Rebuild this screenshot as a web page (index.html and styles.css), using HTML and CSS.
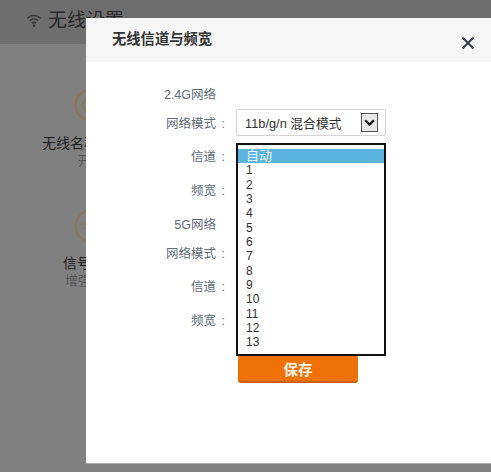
FILE: index.html
```html
<!DOCTYPE html>
<html lang="zh">
<head>
<meta charset="utf-8">
<title>无线信道与频宽</title>
<link rel="stylesheet" href="styles.css">
</head>
<body>
<div class="page">
  <header class="page-head">
    <svg class="wifi" viewBox="0 0 16 16" width="16" height="16"><path d="M1.500 6.200C5 2.600 11 2.600 14.500 6.200M3.800 8.800c2.400-2.300 6-2.300 8.400 0M6 11.200c1.200-1 2.800-1 4 0" fill="none" stroke="#333" stroke-width="1.500"/><circle cx="8" cy="13.600" r="1.300" fill="#333"/></svg>
    <span class="page-title">无线设置</span>
  </header>
  <section class="feature first">
    <svg class="ring" viewBox="0 0 34 34" width="34" height="34"><circle cx="17" cy="17" r="15.500" fill="none" stroke="#8f7654" stroke-width="2"/><circle cx="17" cy="17" r="8" fill="none" stroke="#8f7654" stroke-width="2"/></svg>
    <div class="feature-name">无线名称与密码</div>
    <div class="feature-sub">开启</div>
  </section>
  <section class="feature second">
    <svg class="ring" viewBox="0 0 34 34" width="34" height="34"><circle cx="17" cy="17" r="15.500" fill="none" stroke="#8f7654" stroke-width="1.500"/><path d="M6 15h14M9 19h8" stroke="#8f7654" stroke-width="1.500"/></svg>
    <div class="feature-name">信号强度</div>
    <div class="feature-sub">增强信号</div>
  </section>
</div>

<div class="modal">
  <div class="modal-head">
    <h1 class="modal-title">无线信道与频宽</h1>
    <svg class="close" viewBox="0 0 14 14" width="14" height="14"><path d="M1.500 1.500l11 11M12.500 1.500l-11 11" stroke="#333c48" stroke-width="2" fill="none"/></svg>
  </div>
  <div class="form">
    <div class="row group"><span class="label">2.4G网络</span></div>
    <div class="row mode-row">
      <span class="label">网络模式 :</span>
      <div class="select">
        <span>11b/g/n 混合模式</span>
        <span class="arrow"><svg viewBox="0 0 10 7" width="11" height="8"><path d="M1 1l4 4 4-4" fill="none" stroke="#111" stroke-width="2"/></svg></span>
      </div>
    </div>
    <div class="row after-select"><span class="label">信道 :</span></div>
    <div class="row"><span class="label">频宽 :</span></div>
    <div class="row group-five"><span class="label">5G网络</span></div>
    <div class="row tight"><span class="label">网络模式 :</span></div>
    <div class="row after-tight"><span class="label">信道 :</span></div>
    <div class="row"><span class="label">频宽 :</span></div>
    <button class="save">保存</button>
  </div>
  <ul class="dropdown">
    <li class="selected">自动</li>
    <li>1</li><li>2</li><li>3</li><li>4</li><li>5</li><li>6</li><li>7</li>
    <li>8</li><li>9</li><li>10</li><li>11</li><li>12</li><li>13</li>
  </ul>
</div>
</body>
</html>
```
FILE: styles.css
```css
* { box-sizing: border-box; }
html, body { margin: 0; height: 100%; }
body {
  width: 491px;
  height: 472px;
  overflow: hidden;
  position: relative;
  background: #808080;
  font-family: "Liberation Sans", "Noto Sans CJK SC", sans-serif;
}
.page-head {
  height: 44px;
  background: #6e6e6e;
  display: flex;
  align-items: flex-start;
  gap: 6px;
  padding: 11px 0 0 26px;
}
.wifi { margin-top: 1px; }
.page-title { font-size: 19px; line-height: 20px; color: #2a2a2a; }
.feature {
  display: flex;
  flex-direction: column;
  align-items: center;
  width: 182px;
  white-space: nowrap;
}
.feature.first { padding-top: 44px; }
.feature.second { padding-top: 39px; }
.ring { flex: none; }
.feature-name { font-size: 14px; line-height: 18px; color: #1c1c1c; }
.first .feature-name { margin-top: 12px; }
.second .feature-name { margin-top: 11px; }
.feature-sub { font-size: 13px; line-height: 18px; color: #555; }
.modal {
  position: absolute;
  left: 86px;
  top: 18px;
  right: 0;
  height: 445px;
  background: #fff;
  box-shadow: 0 1px 0 #aaa;
}
.modal-head {
  height: 44px;
  background: #f6f6f6;
  display: flex;
  align-items: center;
  justify-content: space-between;
  padding: 0 16px 0 26px;
}
.modal-title { margin: 0 0 6px; font-size: 14.300px; font-weight: bold; color: #333; }
.close { margin-top: 6px; }
.form { padding-top: 22px; }
.row {
  display: flex;
  align-items: center;
  height: 34px;
}
.row .label {
  width: 139px;
  text-align: right;
  font-size: 12.500px;
  word-spacing: 2px;
  color: #5f6b75;
  white-space: nowrap;
  flex: none;
}
.row.group { height: 18px; }
.row.group .label { width: 130px; }
.row.mode-row { height: 27px; margin-top: 7px; }
.row.after-select { margin-top: 2px; }
.row.group-five .label { width: 130px; }
.row.tight { height: 24px; }
.row.after-tight { margin-top: 4px; }
.select {
  margin-left: 11px;
  width: 150px;
  height: 27px;
  border: 1px solid #d4d4d4;
  background: #fff;
  display: flex;
  align-items: center;
  justify-content: space-between;
  padding: 0 7px 0 8px;
  font-size: 12.800px;
  color: #333;
  border-radius: 2px;
  white-space: nowrap;
}
.arrow {
  width: 17px;
  height: 19px;
  border: 1px solid #555;
  background: #e8e8e8;
  display: flex;
  align-items: center;
  justify-content: center;
}
.save {
  display: block;
  margin: 19px 0 0 152px;
  width: 120px;
  height: 28px;
  border: 0;
  border-bottom: 2px solid #c85f08;
  border-radius: 3px;
  background: #ef7206;
  color: #fdf3e6;
  font-family: inherit;
  font-size: 14.500px;
  font-weight: bold;
}
.dropdown {
  position: absolute;
  left: 150px;
  top: 125px;
  width: 150px;
  height: 213px;
  margin: 0;
  padding: 4px 0 0;
  list-style: none;
  background: #fff;
  border: 2px solid #111;
  font-size: 12px;
  color: #333;
}
.dropdown li {
  height: 14.330px;
  line-height: 15px;
  padding-left: 8px;
}
.dropdown li.selected { background: #5bb4e0; color: #e8f6fd; font-size: 13px; line-height: 14px; }
```
